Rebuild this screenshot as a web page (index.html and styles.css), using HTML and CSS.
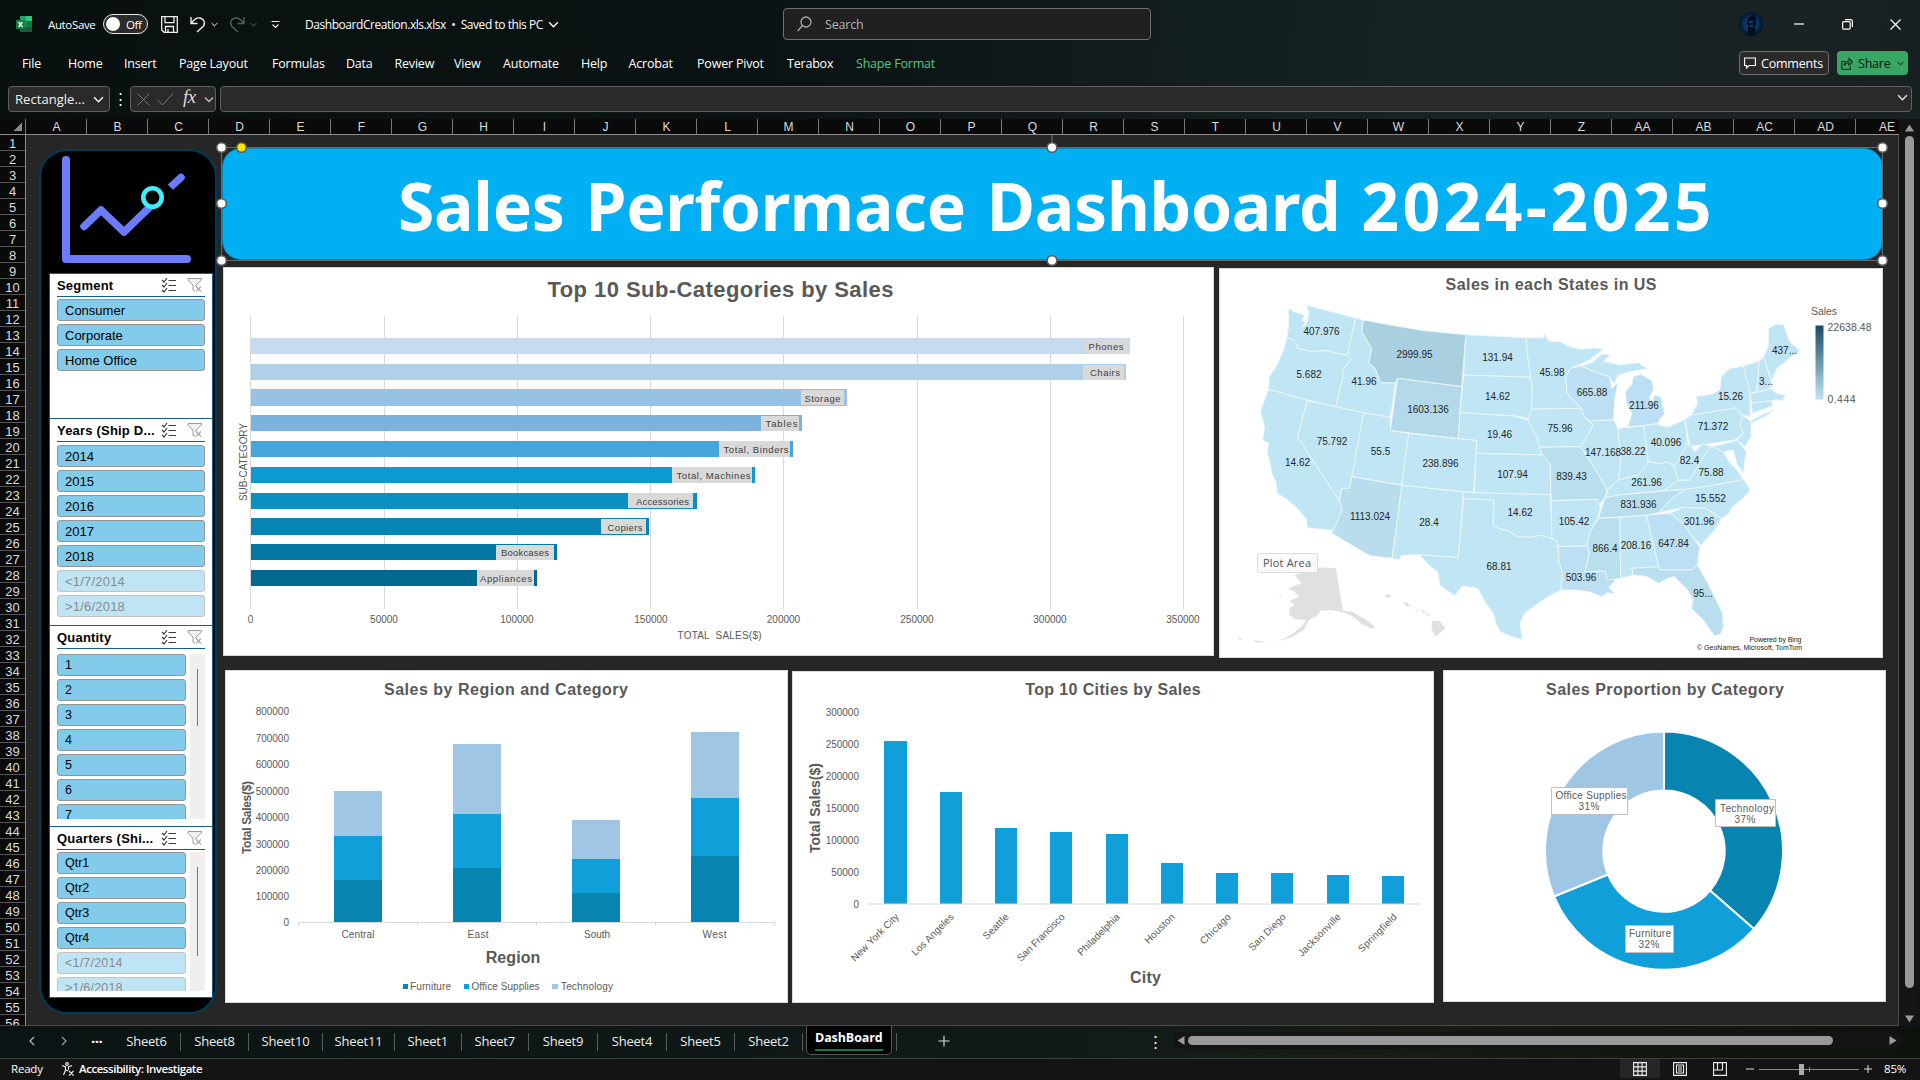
FILE: index.html
```html
<!DOCTYPE html>
<html lang="en">
<head>
<meta charset="utf-8">
<title>DashboardCreation.xls.xlsx - Excel</title>
<link rel="stylesheet" href="styles.css">
</head>
<body>
<svg class="defs" width="0" height="0" aria-hidden="true">
  <symbol id="chev" viewBox="0 0 10 6"><path d="M1 1l4 4 4-4" fill="none" stroke="currentColor" stroke-width="1.4"/></symbol>
  <symbol id="multi" viewBox="0 0 16 16"><path d="M1 3l2 2 3-4M1 8l2 2 3-4M1 13l2 2 3-4M7.500 3.500h7.500M7.500 8.500h7.500M7.500 13.500h7.500" fill="none" stroke="#3c3c3c" stroke-width="1.2"/></symbol>
  <symbol id="clear" viewBox="0 0 16 16"><path d="M1 1.500h13.500v1.500L9 8v2M1 1.500V3l5 5v5l2 1.500" fill="#f0f0f0" stroke="#9b9b9b" stroke-width="1"/><path d="M9 9.500l5 5M14 9.500l-5 5" stroke="#a8a8a8" stroke-width="1.200"/></symbol>
</svg>
<div class="app">
  <header class="titlebar">
    <svg class="logo" width="16" height="16" viewBox="0 0 16 16"><path d="M4 0h12v16H4z" fill="#21a366"/><path d="M10 0h6v5h-6z" fill="#33c481"/><path d="M10 5h6v6h-6z" fill="#107c41"/><path d="M4 11h12v5H4z" fill="#185c37"/><path d="M0 4h9v9H0z" fill="#107c41"/><path d="M2.500 6l4 5M6.500 6l-4 5" stroke="#fff" stroke-width="1.400"/></svg>
    <span class="autosave">AutoSave</span>
    <span class="toggle"><i></i>Off</span>
    <svg class="i-save" width="17" height="17" viewBox="0 0 17 17" fill="none" stroke="#eee" stroke-width="1.300"><path d="M.7.700h15.600v15.600H3L.7 14zM4 .700v6h9v-6M4.500 16v-5.500h8V16M7 16v-3"/></svg>
    <svg class="i-undo" width="16" height="17" viewBox="0 0 16 17" fill="none" stroke="#eee" stroke-width="1.400"><path d="M1 1v6.500h6.500M1.500 7C4 3.500 7 1.500 10 2c4 .8 5.500 4.500 3.500 8L7 16"/></svg>
    <svg class="i-c1" width="7" height="5"><use href="#chev"/></svg>
    <svg class="i-redo" width="16" height="17" viewBox="0 0 16 17" fill="none" stroke="#555e5e" stroke-width="1.400"><path d="M15 1v6.500H8.500M14.500 7C12 3.500 9 1.500 6 2 2 2.800.5 6.500 2.500 10L9 16"/></svg>
    <svg class="i-c2" width="7" height="5"><use href="#chev"/></svg>
    <svg class="i-custom" width="9" height="9" viewBox="0 0 9 9" fill="none" stroke="#eee" stroke-width="1.200"><path d="M.5 1.500h8M1.500 4.500l3 3 3-3"/></svg>
    <span class="docname">DashboardCreation.xls.xlsx&nbsp; •&nbsp; Saved to this PC</span>
    <svg class="i-c3" width="11" height="7"><use href="#chev"/></svg>
    <div class="search"><svg width="15" height="16" viewBox="0 0 15 16" fill="none" stroke="#aaa" stroke-width="1.300"><circle cx="9" cy="6" r="5"/><path d="M5.500 9.500L.7 15"/></svg>Search</div>
    <svg class="avatar" width="24" height="24" viewBox="0 0 24 24"><defs><radialGradient id="av"><stop offset="0" stop-color="#0660a8"/><stop offset="1" stop-color="#031528"/></radialGradient></defs><circle cx="12" cy="12" r="12" fill="url(#av)"/><path d="M9 24V13l-2-1 3-7 4-3 3 4v6l-1 3v9zM11 14v8" fill="#03101c"/><path d="M10 10h4M11 14h3" stroke="#1d7bc4"/></svg>
    <svg class="i-min" width="10" height="10" viewBox="0 0 10 10"><path d="M0 5h10" stroke="#fff" stroke-width="1.200"/></svg>
    <svg class="i-max" width="11" height="11" viewBox="0 0 11 11" fill="none" stroke="#fff" stroke-width="1.200"><rect x=".6" y="2.600" width="7.600" height="7.600" rx="1.200"/><path d="M3 .6h5.500q1.900 0 1.900 1.900V8"/></svg>
    <svg class="i-close" width="11" height="11" viewBox="0 0 11 11"><path d="M.5.5l10 10M10.500.5l-10 10" stroke="#fff" stroke-width="1.200"/></svg>
  </header>

  <nav class="ribbon">
    <div class="menu"><span>File</span><span>Home</span><span>Insert</span><span>Page Layout</span><span>Formulas</span><span>Data</span><span>Review</span><span>View</span><span>Automate</span><span>Help</span><span>Acrobat</span><span>Power Pivot</span><span>Terabox</span><span class="ctx">Shape Format</span></div>
    <button class="btn comments"><svg width="12" height="12" viewBox="0 0 12 12" fill="none" stroke="#fff" stroke-width="1.100"><path d="M.6 1h10.800v7.500H5L2.500 11V8.500H.6z"/></svg>Comments</button>
    <button class="btn share"><svg width="12" height="13" viewBox="0 0 12 13" fill="none" stroke="#0a2a17" stroke-width="1.100"><path d="M4 4.500H.8v7.700h8.700V9.500M3 8.500C3.500 5.500 5.500 4 8 4V1.500L11.400 5 8 8.300V6C6 6 4.500 6.500 3 8.500z"/></svg>Share<svg class="sc" width="7" height="5"><use href="#chev"/></svg></button>
  </nav>

  <div class="formulabar">
    <div class="namebox"><span>Rectangle...</span><svg width="11" height="7"><use href="#chev"/></svg></div>
    <div class="dots">⋮</div>
    <div class="fxbox">
      <svg width="13" height="13" viewBox="0 0 13 13"><path d="M.5.5l12 12M12.500.5l-12 12" stroke="#777"/></svg>
      <svg width="17" height="13" viewBox="0 0 17 13"><path d="M.5 7l5 5L16 .5" fill="none" stroke="#777"/></svg>
      <em>fx</em>
      <svg width="10" height="7"><use href="#chev"/></svg>
    </div>
    <div class="formula"><svg width="11" height="7"><use href="#chev"/></svg></div>
  </div>

  <main class="grid">
    <div class="colheads"><b class="corner"></b><b>A</b><b>B</b><b>C</b><b>D</b><b>E</b><b>F</b><b>G</b><b>H</b><b>I</b><b>J</b><b>K</b><b>L</b><b>M</b><b>N</b><b>O</b><b>P</b><b>Q</b><b>R</b><b>S</b><b>T</b><b>U</b><b>V</b><b>W</b><b>X</b><b>Y</b><b>Z</b><b>AA</b><b>AB</b><b>AC</b><b>AD</b><b>AE</b></div>
    <div class="rowheads"><b>1</b><b>2</b><b>3</b><b>4</b><b>5</b><b>6</b><b>7</b><b>8</b><b>9</b><b>10</b><b>11</b><b>12</b><b>13</b><b>14</b><b>15</b><b>16</b><b>17</b><b>18</b><b>19</b><b>20</b><b>21</b><b>22</b><b>23</b><b>24</b><b>25</b><b>26</b><b>27</b><b>28</b><b>29</b><b>30</b><b>31</b><b>32</b><b>33</b><b>34</b><b>35</b><b>36</b><b>37</b><b>38</b><b>39</b><b>40</b><b>41</b><b>42</b><b>43</b><b>44</b><b>45</b><b>46</b><b>47</b><b>48</b><b>49</b><b>50</b><b>51</b><b>52</b><b>53</b><b>54</b><b>55</b><b>56</b></div>
    <div class="canvas">
      <aside class="side">
        <svg class="trend" width="138" height="122" viewBox="59 151 138 122" fill="none" stroke="#6b7cff" stroke-linecap="round" stroke-linejoin="round"><path d="M66 160v99h121" stroke-width="8"/><path d="M84 226.500L101 210l23 22 29-28" stroke-width="7.500"/><path d="M170 187.500l11-10" stroke-width="7.500"/><path d="M164 185l9 9" stroke="#000" stroke-width="6" stroke-linecap="butt"/><circle cx="152.500" cy="197.500" r="9.200" fill="#000" stroke="#42edff" stroke-width="4.600"/></svg>
        <section class="slicer s-seg">
          <h3>Segment<svg width="16" height="16"><use href="#multi"/></svg><svg width="16" height="16"><use href="#clear"/></svg></h3>
          <div class="list"><span>Consumer</span><span>Corporate</span><span>Home Office</span></div>
        </section>
        <section class="slicer s-years">
          <h3>Years (Ship D...<svg width="16" height="16"><use href="#multi"/></svg><svg width="16" height="16"><use href="#clear"/></svg></h3>
          <div class="list"><span>2014</span><span>2015</span><span>2016</span><span>2017</span><span>2018</span><span class="off">&lt;1/7/2014</span><span class="off">&gt;1/6/2018</span></div>
        </section>
        <section class="slicer s-qty">
          <h3>Quantity<svg width="16" height="16"><use href="#multi"/></svg><svg width="16" height="16"><use href="#clear"/></svg></h3>
          <div class="scroll"><div class="list"><span>1</span><span>2</span><span>3</span><span>4</span><span>5</span><span>6</span><span>7</span></div><div class="track"><i></i></div></div>
        </section>
        <section class="slicer s-qtr">
          <h3>Quarters (Shi...<svg width="16" height="16"><use href="#multi"/></svg><svg width="16" height="16"><use href="#clear"/></svg></h3>
          <div class="scroll"><div class="list"><span>Qtr1</span><span>Qtr2</span><span>Qtr3</span><span>Qtr4</span><span class="off">&lt;1/7/2014</span><span class="off">&gt;1/6/2018</span></div><div class="track"><i></i></div></div>
        </section>
      </aside>

      <div class="board">
        <div class="banner">
          <h1>Sales Performace Dashboard <span>2024-2025</span></h1>
          <svg class="select" width="1680" height="134" viewBox="212 135 1680 134"><path d="M1052 134v13" stroke="#777"/><rect x="221.500" y="147.500" width="1661" height="113" fill="none" stroke="#6b6b6b"/><g fill="#fff" stroke="#5c5c5c" stroke-width="1.600"><circle cx="221.500" cy="147.500" r="4.800"/><circle cx="1052" cy="147.500" r="4.800"/><circle cx="1882.500" cy="147.500" r="4.800"/><circle cx="221.500" cy="203.500" r="4.800"/><circle cx="1882.500" cy="203.500" r="4.800"/><circle cx="221.500" cy="260.500" r="4.800"/><circle cx="1052" cy="260.500" r="4.800"/><circle cx="1882.500" cy="260.500" r="4.800"/><circle cx="241.500" cy="147.500" r="4.800" fill="#ffe600"/></g></svg>
        </div>

        <div class="row r1">
          <section class="panel p-sub">
            <svg width="991" height="389" viewBox="223 267 991 389">
              <text class="t big" x="720.500" y="289" textLength="346">Top 10 Sub-Categories by Sales</text>
              <path class="gl" d="M250.500 315.500V609M384.500 315.500V609M517.500 315.500V609M650.500 315.500V609M783.500 315.500V609M917.500 315.500V609M1050.500 315.500V609M1183.500 315.500V609"/>
              <path fill="#c6daf0" d="M251 338h879v16H251z"/><path fill="#b0d0ea" d="M251 364h875v16H251z"/><path fill="#98c2e3" d="M251 389h596v17H251z"/><path fill="#7ab4de" d="M251 415h551v16H251z"/><path fill="#46a5da" d="M251 441h542v16H251z"/><path fill="#0c9ad0" d="M251 467h504v16H251z"/><path fill="#0a90c2" d="M251 493h446v16H251z"/><path fill="#0784b4" d="M251 518h398v17H251z"/><path fill="#0577a4" d="M251 544h306v16H251z"/><path fill="#03688e" d="M251 570h286v16H251z"/>
              <path fill="#d9d9d9" d="M1084 339h43v15h-43zM1083 365h41v15h-41zM801 390h43v15h-43zM761 416h38v15h-38zM719 441h71v16h-71zM672 467h80v16h-80zM628 493h65v15h-65zM601 519h45v15h-45zM496 545h58v15h-58zM477 570h57v16h-57z"/>
              <g class="lb"><text x="1106" y="346" textLength="35">Phones</text><text x="1105" y="372" textLength="30">Chairs</text><text x="822.500" y="398" textLength="36">Storage</text><text x="781.500" y="423" textLength="32">Tables</text><text x="756" y="449" textLength="65">Total, Binders</text><text x="713.500" y="475" textLength="74">Total, Machines</text><text x="662.500" y="501" textLength="53">Accessories</text><text x="625" y="527" textLength="35">Copiers</text><text x="525" y="552" textLength="48">Bookcases</text><text x="506" y="578" textLength="52">Appliances</text></g>
              <g class="ax"><text x="250.500" y="619">0</text><text x="384" y="619">50000</text><text x="517" y="619">100000</text><text x="651" y="619">150000</text><text x="783.500" y="619">200000</text><text x="917" y="619">250000</text><text x="1050" y="619">300000</text><text x="1183" y="619">350000</text><text x="719.500" y="635.500" textLength="84" xml:space="preserve">TOTAL  SALES($)</text><text transform="translate(243.500 462) rotate(-90)" textLength="78">SUB-CATEGORY</text></g>
            </svg>
          </section>

          <section class="panel p-map">
            <svg width="664" height="390" viewBox="1219 268 664 390">
              <defs><linearGradient id="lg" x2="0" y2="1"><stop offset="0" stop-color="#164a63"/><stop offset="1" stop-color="#c0e5f5"/></linearGradient></defs>
              <text class="t" x="1551" y="284.500" textLength="211">Sales in each States in US</text>
              <g class="map" transform="translate(1210 260) scale(.44643 .33333)">
                <path d="M176 145L192 158 212 165 206 180 213 190 204 203 216 192 222 160 216 136 326 174 308 286 270 275 256 272 230 275 196 265 192 248 188 240 172 233 176 200Z"/>
                <path d="M172 233L188 240 192 248 196 265 230 275 256 272 270 275 308 286 316 300 296 330 299 345 282 440 210 418 131 388 133 350 150 315 165 270Z"/>
                <path d="M131 388L210 418 218 422 196 530 290 722 296 750 282 795 278 812 218 803 215 775 195 745 175 720 150 700 148 665 138 640 135 610 128 575 132 550 118 540 122 500 113 455 122 420Z"/>
                <path d="M218 422L282 440 344 458 318 650 312 685 295 685 290 722 196 530Z"/>
                <path d="M326 174L344 180 340 215 362 265 356 310 370 325 382 368 416 368 404 472 344 458 282 440 299 345 296 330 316 300 308 286Z"/>
                <path fill="#aacfe1" d="M344 180L400 194 480 212 573 224 564 380 420 355 416 368 382 368 370 325 356 310 362 265 340 215Z"/>
                <path fill="#b4d9ea" d="M420 355L564 380 556 536 404 512Z"/>
                <path d="M344 458L404 472 404 512 445 520 430 676 318 650Z"/>
                <path d="M445 520L556 536 598 541 590 698 430 676Z"/>
                <path fill="#b9dded" d="M318 650L430 676 408 895 358 887 273 820 282 795 296 750 290 722 295 685 312 685Z"/>
                <path d="M430 676L568 696 556 893 470 884 428 886 426 900 408 895Z"/>
                <path d="M573 224L708 233 712 290 718 352 568 345Z"/>
                <path d="M568 345L718 352 722 375 720 445 718 478 690 468 560 458Z"/>
                <path d="M560 458L680 468 712 480 732 530 745 585 596 580 598 541 556 536Z"/>
                <path d="M596 580L745 585 755 592 762 610 763 704 592 700Z"/>
                <path d="M568 696L590 698 763 704 766 838 740 826 715 832 690 830 675 818 660 810 645 805 634 795 636 720 568 716Z"/>
                <path d="M568 716L636 720 634 795 645 805 660 810 675 818 690 830 715 832 740 826 778 842 782 905 790 940 786 990 760 1008 740 1025 705 1060 694 1090 700 1138 680 1132 650 1115 640 1088 635 1060 618 1030 600 985 565 978 548 1008 515 975 510 935 490 915 470 884 556 893Z"/>
                <path d="M708 233L748 233 750 218 758 242 785 246 800 258 830 268 858 264 882 266 850 300 808 325 797 350 800 400 832 445 720 447 722 375 718 352 712 290Z"/>
                <path d="M720 447L832 445 838 470 858 495 845 530 830 560 738 562 732 530 712 480Z"/>
                <path fill="#b9dfee" d="M738 562L830 560 850 600 868 640 890 690 884 715 868 740 868 718 764 722 762 610 745 585Z"/>
                <path d="M764 722L868 718 875 745 868 775 850 820 845 858 780 860 778 842 766 838Z"/>
                <path fill="#bce0f2" d="M780 860L845 858 850 880 840 935 885 933 892 950 908 962 893 982 908 1002 890 998 878 1010 850 995 820 990 786 990 790 940 782 905Z"/>
                <path fill="#bcdef3" d="M808 325L830 318 860 335 895 350 900 385 914 368 906 420 904 480 850 482 838 470 832 445 800 400 797 350Z"/>
                <path d="M832 318L855 308 878 282 896 284 882 304 920 315 960 308 972 320 985 325 940 335 914 345 905 372 895 350 860 335Z"/>
                <path fill="#bde0f3" d="M936 500L975 496 1002 490 1018 460 1010 410 996 406 990 425 984 412 994 390 990 362 965 343 948 350 945 372 930 395 933 430 945 460Z"/>
                <path d="M850 482L904 480 914 505 920 600 915 660 890 690 868 640 850 600 830 560 845 530 858 495Z"/>
                <path d="M914 505L972 497 982 605 972 625 960 645 915 660 920 600Z"/>
                <path d="M972 497L1000 492 1025 502 1064 478 1070 550 1058 580 1040 620 1025 605 1010 612 982 605Z"/>
                <path d="M888 715L890 690 915 660 960 645 982 605 1010 612 1025 605 1040 620 1048 660 1018 692 914 705Z"/>
                <path fill="#b9dfee" d="M884 715L914 705 1064 688 1035 715 1005 758 978 766 870 775Z"/>
                <path fill="#b9dfee" d="M870 775L918 772 920 955 890 960 885 933 840 935 850 880 845 858 850 820Z"/>
                <path d="M918 772L978 766 1005 920 945 925 948 945 920 955Z"/>
                <path fill="#bbdff1" d="M978 766L1030 760 1060 790 1080 830 1097 860 1092 915 1080 930 1008 930 1005 920Z"/>
                <path fill="#b9def0" d="M945 925L1005 920 1008 930 1080 930 1092 915 1115 970 1130 1010 1148 1060 1150 1100 1144 1122 1130 1128 1105 1080 1078 1045 1082 1020 1070 990 1040 950 1025 955 1005 970 980 950 948 945Z"/>
                <path d="M1030 760L1060 742 1110 745 1146 775 1130 810 1100 855 1080 830 1060 790Z"/>
                <path d="M1064 688L1130 675 1195 658 1210 690 1190 720 1170 740 1160 765 1146 775 1110 745 1060 742 1005 758 1035 715Z"/>
                <path d="M1018 692L1048 660 1075 660 1090 625 1110 580 1125 560 1150 575 1160 600 1180 630 1195 658 1130 675 1064 688Z"/>
                <path d="M1070 550L1078 558 1085 575 1105 552 1125 560 1110 580 1090 625 1075 660 1048 660 1040 620 1058 580Z"/>
                <path d="M1064 478L1078 465 1180 443 1192 465 1188 500 1195 520 1175 540 1075 560Z"/>
                <path d="M1078 465L1092 430 1090 410 1125 402 1142 390 1145 350 1165 325 1195 318 1210 395 1210 470 1192 465 1180 443ZM1212 482L1240 462 1262 450 1250 465 1215 488Z"/>
                <path d="M1192 465L1212 485 1212 530 1198 560 1180 540 1195 520 1188 500Z"/>
                <path d="M1125 560L1170 545 1180 540 1202 575 1198 600 1195 640 1180 610 1172 570 1150 575Z"/>
                <path d="M1195 318L1230 303 1225 395 1210 400Z"/><path d="M1230 303L1240 290 1258 365 1256 385 1225 397Z"/>
                <path d="M1210 402L1256 386 1268 400 1288 405 1284 422 1270 420 1212 430Z"/><path d="M1212 430L1258 422 1260 438 1215 460Z"/>
                <path d="M1240 290L1250 260 1252 205 1268 192 1285 194 1298 245 1322 272 1298 295 1270 325 1258 362Z"/>
                <g class="ak"><path d="M190 945L245 922 282 925 298 1052 320 1056 350 1080 370 1100 362 1106 340 1092 318 1068 296 1056 270 1050 248 1052 240 1068 222 1080 210 1110 185 1130 150 1145 180 1126 205 1100 215 1080 192 1078 178 1065 178 1045 190 1035 178 1022 200 1010 192 998 175 985 205 970ZM60 1130l15 8-8 2zM95 1140l30 5-20 3zM155 1005l8 8-6-2z"/><path d="M392 1006l10-3 4 8-9 4zM434 1026l8 2 6 10-8 2zM458 1046l10 2-2 3zM472 1048l10 6-4 5zM481 1058l12 4-4 6zM498 1082L515 1083 527 1105 505 1130 498 1112 496 1095Z"/></g>
              </g>
              <g class="ml"><text x="1321.500" y="331.500">407.976</text><text x="1309" y="374.500">5.682</text><text x="1364" y="381.500">41.96</text><text x="1414.500" y="354.500">2999.95</text><text x="1497.500" y="357.500">131.94</text><text x="1552" y="372.500">45.98</text><text x="1497.500" y="396.500">14.62</text><text x="1428" y="409.500">1603.136</text><text x="1592" y="392.500">665.88</text><text x="1644" y="405.500">211.96</text><text x="1499.500" y="434.500">19.46</text><text x="1560" y="428.500">75.96</text><text x="1332" y="441.500">75.792</text><text x="1380.500" y="451.500">55.5</text><text x="1440.500" y="463.500">238.896</text><text x="1297.500" y="462.500">14.62</text><text x="1512.500" y="474.500">107.94</text><text x="1571.500" y="476.500">839.43</text><text x="1603" y="452.500">147.168</text><text x="1633" y="451.500">38.22</text><text x="1666" y="442.500">40.096</text><text x="1689.500" y="460.500">82.4</text><text x="1711" y="472.500">75.88</text><text x="1646.500" y="482.500">261.96</text><text x="1710.500" y="498.500">15.552</text><text x="1638.500" y="504.500">831.936</text><text x="1699" y="521.500">301.96</text><text x="1713" y="426.500">71.372</text><text x="1730.500" y="396.500">15.26</text><text x="1784.500" y="350.500">437...</text><text x="1766" y="381">3...</text><text x="1520" y="512.500">14.62</text><text x="1574" y="521.500">105.42</text><text x="1605" y="548.500">866.4</text><text x="1636" y="545.500">208.16</text><text x="1673.500" y="543.500">647.84</text><text x="1370" y="516.500">1113.024</text><text x="1429" y="522.500">28.4</text><text x="1499" y="566.500">68.81</text><text x="1581" y="577.500">503.96</text><text x="1703" y="593.500">95...</text></g>
              <path fill="url(#lg)" d="M1815.500 325.500h8v74h-8z"/>
              <g class="lgd"><text x="1811" y="310.500" textLength="26">Sales</text><text x="1827.500" y="326.500" textLength="44">22638.48</text><text x="1827.500" y="399" textLength="28">0.444</text></g>
              <rect x="1257.500" y="553.500" width="60" height="19" rx="2" fill="#fafafa" stroke="#dcdcdc"/><text class="tip" x="1287" y="562" textLength="48">Plot Area</text>
              <g class="cr"><text x="1801.500" y="639.500" textLength="52">Powered by Bing</text><text x="1802" y="647.500" textLength="105">© GeoNames, Microsoft, TomTom</text></g>
            </svg>
          </section>
        </div>

        <div class="row r2">
          <section class="panel p-reg">
            <svg width="563" height="333" viewBox="225 670 563 333">
              <text class="t" x="506" y="689.500" textLength="244">Sales by Region and Category</text>
              <g class="ax end"><text x="289" y="711.500">800000</text><text x="289" y="738.500">700000</text><text x="289" y="764.500">600000</text><text x="289" y="791">500000</text><text x="289" y="817">400000</text><text x="289" y="844">300000</text><text x="289" y="870">200000</text><text x="289" y="896">100000</text><text x="289" y="922">0</text></g>
              <path fill="#a0c6e6" d="M334 791h48v46h-48zM453 744h48v71h-48zM572 820h48v40h-48zM691 732h48v67h-48z"/>
              <path fill="#119fd9" d="M334 836h48v44h-48zM453 814h48v55h-48zM572 859h48v34h-48zM691 798h48v59h-48z"/>
              <path fill="#0784b0" d="M334 880h48v43h-48zM453 868h48v55h-48zM572 893h48v30h-48zM691 856h48v67h-48z"/>
              <path class="gl" d="M298 922.500h477M298.500 923v3M417.500 923v3M536.500 923v3M655.500 923v3M774.500 923v3"/>
              <g class="ax"><text x="358" y="934.500" textLength="33">Central</text><text x="478" y="934.500" textLength="21">East</text><text x="597" y="934.500" textLength="26">South</text><text x="714.500" y="934.500" textLength="24">West</text></g>
              <text class="t" x="513" y="957.500" textLength="54.500">Region</text>
              <text class="t v12" transform="translate(246.500 817.500) rotate(-90)" textLength="73">Total Sales($)</text>
              <path fill="#0784b0" d="M403 984h5v5h-5z"/><path fill="#119fd9" d="M464 984h5v5h-5z"/><path fill="#a0c6e6" d="M552 984h6v5h-6z"/>
              <g class="ax"><text x="430.500" y="986" textLength="41">Furniture</text><text x="505.500" y="986" textLength="68">Office Supplies</text><text x="587" y="986" textLength="52">Technology</text></g>
            </svg>
          </section>
          <section class="panel p-city">
            <svg width="642" height="332" viewBox="792 671 642 332">
              <text class="t" x="1113" y="689.500" textLength="175.500">Top 10 Cities by Sales</text>
              <g class="ax end"><text x="859" y="712.500">300000</text><text x="859" y="744.500">250000</text><text x="859" y="776.500">200000</text><text x="859" y="808">150000</text><text x="859" y="840">100000</text><text x="859" y="872">50000</text><text x="859" y="904">0</text></g>
              <path fill="#119fd9" d="M884 741h23v163h-23zM940 792h22v112h-22zM995 828h22v76h-22zM1050 832h22v72h-22zM1106 834h22v70h-22zM1161 863h22v41h-22zM1216 873h22v31h-22zM1271 873h22v31h-22zM1327 875h22v29h-22zM1382 876h22v28h-22z"/>
              <path class="gl" d="M867 904h554"/>
              <g class="ax end"><text transform="translate(897 915) rotate(-45)" textLength="63">New York City</text><text transform="translate(952 915) rotate(-45)" textLength="55">Los Angeles</text><text transform="translate(1007 915) rotate(-45)" textLength="32">Seattle</text><text transform="translate(1063 915) rotate(-45)" textLength="63">San Francisco</text><text transform="translate(1118 915) rotate(-45)" textLength="55">Philadelphia</text><text transform="translate(1173 915) rotate(-45)" textLength="38">Houston</text><text transform="translate(1229 915) rotate(-45)" textLength="39">Chicago</text><text transform="translate(1284 915) rotate(-45)" textLength="48">San Diego</text><text transform="translate(1339 915) rotate(-45)" textLength="56">Jacksonville</text><text transform="translate(1395 915) rotate(-45)" textLength="50">Springfield</text></g>
              <text class="t" x="1145.500" y="977.500" textLength="31">City</text>
              <text class="t v14" transform="translate(815 808) rotate(-90)" textLength="90">Total Sales($)</text>
            </svg>
          </section>
          <section class="panel p-prop">
            <svg width="443" height="332" viewBox="1443 670 443 332">
              <text class="t" x="1665" y="689.500" textLength="238">Sales Proportion by Category</text>
              <g stroke="#fff" stroke-width="2"><path fill="#0784b0" d="M1664 731.500A119.500 119.500 0 0 1 1754 929L1710 890.500A60.500 60.500 0 0 0 1664 790.500Z"/><path fill="#119fd9" d="M1754 929A119.500 119.500 0 0 1 1554 896.500L1608 874.500A60.500 60.500 0 0 0 1710 890.500Z"/><path fill="#a0c6e6" d="M1554 896.500A119.500 119.500 0 0 1 1664 731.500V790.500A60.500 60.500 0 0 0 1608 874.500Z"/></g>
              <g fill="#fff" stroke="#bfbfbf"><path d="M1551.500 787.500h76v27h-76zM1715.500 799.500h60v27h-60zM1625.500 925.500h48v27h-48z"/></g>
              <g class="ax"><text x="1591" y="795.500" textLength="71">Office Supplies</text><text x="1589" y="806.500" textLength="21">31%</text><text x="1747" y="808.500" textLength="54">Technology</text><text x="1745" y="819.500" textLength="21">37%</text><text x="1650" y="933.500" textLength="42">Furniture</text><text x="1649" y="944.500" textLength="21">32%</text></g>
            </svg>
          </section>
        </div>
      </div>
    </div>
    <div class="vbar"><svg width="9" height="8" viewBox="0 0 9 8"><path d="M4.500.5L9 7.500H0z" fill="#9a9a9a"/></svg><i></i><svg width="9" height="8" viewBox="0 0 9 8"><path d="M4.500 7.500L9 .5H0z" fill="#9a9a9a"/></svg></div>
  </main>

  <footer class="tabs">
    <div class="nav"><svg width="6" height="10" viewBox="0 0 6 10"><path d="M5 1L1 5l4 4" fill="none" stroke="#bbb" stroke-width="1.200"/></svg><svg width="6" height="10" viewBox="0 0 6 10"><path d="M1 1l4 4-4 4" fill="none" stroke="#999" stroke-width="1.200"/></svg><b>···</b></div>
    <div class="names"><span>Sheet6</span><span>Sheet8</span><span>Sheet10</span><span>Sheet11</span><span>Sheet1</span><span>Sheet7</span><span>Sheet9</span><span>Sheet4</span><span>Sheet5</span><span>Sheet2</span></div>
    <div class="active"><span>DashBoard</span></div>
    <i class="sep"></i>
    <svg class="plus" width="12" height="12" viewBox="0 0 12 12"><path d="M6 .5v11M.5 6h11" stroke="#ddd" stroke-width="1.100"/></svg>
    <div class="kebab">⋮</div>
    <div class="hbar"><svg width="8" height="9" viewBox="0 0 8 9"><path d="M.5 4.500L7.500 0v9z" fill="#9a9a9a"/></svg><i></i><svg width="8" height="9" viewBox="0 0 8 9"><path d="M7.500 4.500L.5 0v9z" fill="#9a9a9a"/></svg></div>
  </footer>
  <div class="status">
    <span class="ready">Ready</span>
    <svg width="14" height="14" viewBox="0 0 14 14" fill="none" stroke="#eee" stroke-width="1.200"><circle cx="6" cy="2" r="1.300"/><path d="M1 3.500l3.500 1.500v3L2.500 13M11 3.500L7.500 5v3M4.500 8L7 9M8 9l4.500 4.500M12.500 9L8 13.500"/></svg>
    <span class="acc">Accessibility: Investigate</span>
    <div class="views">
      <span class="on"><svg width="14" height="14" viewBox="0 0 14 14" fill="none" stroke="#eee" stroke-width="1.100"><path d="M.6.6h12.800v12.800H.6zM4.900.6v12.800M9.100.6v12.800M.6 4.900h12.800M.6 9.100h12.800"/></svg></span>
      <span><svg width="14" height="14" viewBox="0 0 14 14" fill="none" stroke="#eee" stroke-width="1.100"><path d="M.6.6h12.800v12.800H.6zM3.500 3h7v8h-7zM5 5h4M5 7h4M5 9h4"/></svg></span>
      <span><svg width="14" height="14" viewBox="0 0 14 14" fill="none" stroke="#eee" stroke-width="1.100"><path d="M.6.6h12.800v12.800H.6zM4.500.6V8M.6 8h8.900V.6"/></svg></span>
    </div>
    <svg class="zoomer" width="126" height="12" viewBox="1746 1062 126 12"><path d="M1746 1068h8M1864 1068h8M1868 1064v8" stroke="#ddd"/><path d="M1759 1068.500h100M1809.500 1066v5" stroke="#8c8c8c"/><path d="M1799 1063h5v11h-5z" fill="#aaa"/></svg>
    <span class="pct">85%</span>
  </div>
</div>
</body>
</html>
```

FILE: styles.css
```css
* { box-sizing: border-box; }
body { margin: 0; background: #0a1212; }
.defs { position: absolute; }
.app {
  width: 1920px; height: 1080px; overflow: hidden;
  display: flex; flex-direction: column;
  font-family: "Open Sans", "Noto Sans", sans-serif; font-size: 13px; color: #fff;
  background: linear-gradient(95deg, #091010 0, #0a1313 38%, #172222 70%, #192323 90%, #151e1e 100%);
}
svg { display: block; flex: none; }

/* title bar */
.titlebar { height: 48px; padding: 8px 0 0 16px; display: flex; align-items: center; flex: none; white-space: nowrap; margin-bottom: 0; }
.titlebar > * { flex: none; margin-bottom: 8px; }
.autosave { width: 55px; margin-left: 16px; font-size: 11.5px; letter-spacing: -.35px; }
.toggle { width: 45px; height: 20px; border: 1.5px solid #e8e8e8; border-radius: 10px; background: #2b2b2b; font-size: 11.5px; letter-spacing: -.4px; display: flex; align-items: center; gap: 6px; padding-left: 2px; }
.toggle i { width: 14px; height: 14px; border-radius: 50%; background: #fff; }
.i-save { margin-left: 13px; }
.i-undo { margin-left: 12px; }
.i-c1 { margin-left: 5px; }
.i-redo { margin-left: 11px; }
.i-c2 { margin-left: 5px; color: #666; }
.i-custom { margin-left: 14px; }
.docname { width: 239px; margin-left: 25px; font-size: 12px; letter-spacing: -.44px; }
.i-c3 { margin-left: 4px; }
.search { width: 368px; height: 32px; margin-left: 224px; border: 1px solid #717171; border-radius: 4px; background: #202020; color: #b4b4b4; font-size: 12.5px; letter-spacing: -.2px; display: flex; align-items: center; gap: 13px; padding-left: 13px; }
.avatar { margin-left: 588px; }
.i-min { margin-left: 31px; }
.i-max { margin-left: 38px; }
.i-close { margin-left: 37px; }

/* ribbon tabs */
.ribbon { height: 38px; padding: 3px 12px 0 22px; display: flex; align-items: flex-start; flex: none; }
.menu { width: 1717px; height: 24px; display: grid; grid-template-columns: 46px 56px 55px 93px 74px 48.500px 59.500px 49px 78px 47.500px 68.500px 90px 69px 90px; align-items: center; letter-spacing: -.2px; white-space: nowrap; font-size: 12.5px; }
.ctx { color: #5fc389; }
.btn { height: 24px; border-radius: 4px; font: 12.5px "Open Sans", sans-serif; letter-spacing: -.2px; display: flex; align-items: center; padding: 0 4px; gap: 5px; }
.comments { width: 90px; color: #fff; background: #2a2a2a; border: 1px solid #6e6e6e; }
.share { width: 71px; margin-left: 8px; background: #3aa663; border: 0; color: #08150c; }
.sc { margin-left: 1px; }

/* formula bar */
.formulabar { height: 33px; padding: 0 8px; display: flex; flex: none; }
.namebox, .fxbox, .formula { height: 26px; border: 1px solid #5f5f5f; border-radius: 4px; background: #2a2a2a; display: flex; align-items: center; }
.namebox { width: 102px; justify-content: space-between; padding: 0 5px 0 6px; color: #f2f2f2; letter-spacing: .05px; }
.dots { width: 20px; text-align: center; line-height: 24px; font-size: 15px; }
.fxbox { width: 86px; gap: 7px; padding-left: 6px; color: #bbb; }
.fxbox em { font: italic 19px "Liberation Serif", serif; width: 15px; letter-spacing: -.5px; color: #ddd; margin: -4px 0 0 2px; }
.fxbox svg:last-child { margin-left: -1px; }
.formula { flex: 1; margin-left: 4px; justify-content: flex-end; padding: 0 3px 4px 0; color: #ddd; }

/* worksheet */
.grid { height: 907px; flex: none; display: grid; grid-template: 16px 891px / 26px 1873px 21px; background: #101616; }
.colheads { grid-column: 1 / 3; display: flex; overflow: hidden; background: #0a0a0a; border-bottom: 1px solid #8d8d8d; }
.colheads b, .rowheads b { font: 13px "Liberation Sans", sans-serif; color: #dcdcdc; flex: none; text-align: center; }
.colheads b { width: 61px; border-right: 1px solid #777; font-size: 12px; line-height: 16px; padding-left: 1px; }
.colheads b:last-child { border: 0; }
.colheads .corner { width: 26px; height: 15px; background: linear-gradient(135deg, transparent 50%, #8a8a8a 50%) 14px 4px / 8px 8px no-repeat; }
.rowheads { grid-row: 2; grid-column: 1; overflow: hidden; background: #0a0a0a; border-right: 1px solid #8d8d8d; display: flex; flex-direction: column; border-bottom: 1px solid #444; }
.rowheads b { height: 16px; border-bottom: 1px solid #555; line-height: 17px; }
.canvas { grid-row: 2; grid-column: 2; background: #262626; border-right: 1px solid #4a4a4a; border-bottom: 1px solid #4a4a4a; display: flex; align-items: flex-start; overflow: hidden; padding-left: 13px; }
.vbar { grid-row: 1 / 3; grid-column: 3; width: 17px; margin-left: 2px; border-radius: 8px; background: #151515; display: flex; flex-direction: column; align-items: center; padding: 5px 0 3px; }
.vbar i { width: 9px; height: 854px; margin: 4px 0 27px; border-radius: 5px; background: #999; }

/* slicer sidebar */
.side { width: 178px; height: 865px; margin-top: 14px; border: 2px solid #003c55; border-radius: 28px; background: #000; padding: 0 2px 0 8px; flex: none; }
.trend { margin-left: 10px; }
.slicer { width: 164px; background: #fff; border: 1px solid #156082; border-bottom: 0; padding: 0 7px; font-family: "Liberation Sans", sans-serif; color: #000; overflow: hidden; }
.slicer h3 { margin: 0 0 2px; height: 23px; border-bottom: 1px solid #156082; font-size: 13px; line-height: 23px; letter-spacing: .2px; display: flex; align-items: center; white-space: nowrap; }
.slicer h3 svg:first-of-type { margin-left: auto; }
.slicer h3 svg { margin-right: 3px; }
.slicer h3 svg + svg { margin-left: 7px; margin-right: 2px; }
.list { display: flex; flex-direction: column; gap: 3px; }
.list span { height: 22px; flex: none; border: 1px solid #959595; border-radius: 3px; background: #83cbeb; font-size: 13px; line-height: 21px; padding-left: 7px; }
.list .off { background: #bfe5f5; border-color: #c3c3c3; color: #8a8a8a; letter-spacing: .2px; }
.s-seg { height: 145px; }
.s-years { height: 207px; }
.s-years .list { padding-top: 1px; }
.s-qty { height: 201px; }
.s-qty .scroll { height: 165px; margin-top: 5px; }
.s-qtr { height: 172px; border-bottom: 1px solid #156082; }
.s-qtr .scroll { height: 139px; margin-top: 2px; }
.scroll { display: flex; gap: 4px; overflow: hidden; }
.scroll .list { width: 129px; }
.scroll span { font-size: 12.5px; }
.track { width: 15px; background: #efefef; }
.track i { display: block; width: 1px; height: 57px; margin: 15px 0 0 7px; background: #777; }
.s-qtr .track i { height: 89px; }

/* dashboard board */
.board { padding-left: 6px; flex: none; }
.banner { position: relative; width: 1661px; height: 112px; margin: 13px 0 0 -1px; border: 1.500px solid #0a82b4; border-radius: 19px; background: #00b0f2; }
.banner h1 { margin: 0; padding-left: 8px; text-align: center; font: bold 66px/113px "Noto Sans", sans-serif; letter-spacing: -.3px; word-spacing: 4px; white-space: nowrap; }
.banner h1 span { letter-spacing: 3.4px; }
.select { position: absolute; left: -11px; top: -14px; }
.row { display: flex; align-items: flex-start; }
.r1 { margin-top: 7px; }
.r2 { margin: 12px 0 0 2px; }
.panel { background: #fff; box-shadow: inset 0 0 0 1px #d9d9d9; }
.p-map { margin: 1px 0 0 5px; }
.p-city { margin: 1px 0 0 4px; }
.p-prop { margin-left: 9px; }
.panel text { font-family: "Liberation Sans", sans-serif; dominant-baseline: central; text-anchor: middle; }
.panel .t { font-size: 16px; font-weight: bold; fill: #595959; }
.panel .big { font-size: 22px; }
.panel .v12 { font-size: 12px; }
.panel .v14 { font-size: 14px; }
.gl { stroke: #d9d9d9; fill: none; }
.lb text { font-size: 9.500px; fill: #404040; }
.ax text { font-size: 10px; fill: #595959; }
.panel .end text { text-anchor: end; }
.map path { fill: #c0e5f5; stroke: #ecf7fc; vector-effect: non-scaling-stroke; stroke-width: 1; stroke-linejoin: round; }
.map path[fill="#aacfe1"] { fill: #aacfe1; }
.map path[fill="#b4d9ea"] { fill: #b4d9ea; }
.map path[fill="#b9dded"] { fill: #b9dded; }
.map path[fill="#b9dfee"], .map path[fill="#b9def0"] { fill: #b9dfee; }
.map path[fill="#bce0f2"], .map path[fill="#bcdef3"], .map path[fill="#bde0f3"], .map path[fill="#bbdff1"] { fill: #bcdff3; }
.map .ak path { fill: #e0e0e0; stroke: none; }
.ml text { font-size: 10px; fill: #262626; }
.panel .lgd text { font-size: 10.500px; fill: #595959; text-anchor: start; }
.panel .tip { font-family: "Open Sans", sans-serif; font-size: 11px; fill: #555; }
.panel .cr text { font-size: 7px; fill: #222; text-anchor: end; }

/* sheet tabs */
.tabs { height: 33px; flex: none; display: flex; align-items: flex-start; border-bottom: 1px solid #3c4141; background: linear-gradient(90deg, #0b1414, #111a17 55%, #171d15 70%, #0d130c); }
.nav { width: 113px; height: 30px; padding: 0 0 0 29px; display: flex; align-items: center; gap: 26px; }
.nav b { font-size: 15px; margin-left: -2px; letter-spacing: -.5px; }
.names { height: 31px; display: grid; grid-template-columns: 68px 68px 74px 72px 66.500px 67.500px 69px 69px 68px 68px; align-items: center; text-align: center; letter-spacing: -.2px; }
.names span { height: 18px; line-height: 17px; border-right: 1px solid #565c5c; color: #ececec; }
.active { width: 86px; height: 29px; margin-left: 3px; background: #000; border: 1px solid #555; border-top: 0; border-radius: 0 0 5px 5px; padding: 3px 8px 0; font-weight: bold; font-size: 12.500px; letter-spacing: -.1px; }
.active span { display: block; height: 22px; border-bottom: 2px solid #107c41; line-height: 18px; white-space: nowrap; }
.sep { width: 1px; height: 18px; margin: 7px 0 0 4px; background: #565c5c; }
.plus { margin: 9px 0 0 41px; }
.kebab { width: 20px; margin-left: 195px; text-align: center; line-height: 31px; font-size: 15px; }
.hbar { width: 729px; height: 17px; margin: 6px 0 0 8px; border-radius: 8px; background: #141414; display: flex; align-items: center; padding: 0 4px; }
.hbar i { width: 645px; height: 9px; margin: 0 56px 0 3px; border-radius: 5px; background: #999; }

/* status bar */
.status { flex: 1; background: #141414; display: flex; align-items: center; font-size: 11.500px; white-space: nowrap; letter-spacing: -.2px; padding-bottom: 2px; }
.ready { width: 50px; margin-left: 11px; }
.acc { width: 130px; margin-left: 4px; font-weight: 600; font-size: 11.500px; letter-spacing: -.45px; }
.views { margin-left: 1411px; display: flex; height: 100%; }
.views span { width: 40px; display: flex; align-items: center; justify-content: center; }
.views .on { background: #262626; }
.zoomer { margin-left: 6px; }
.pct { margin-left: 12px; }
```
